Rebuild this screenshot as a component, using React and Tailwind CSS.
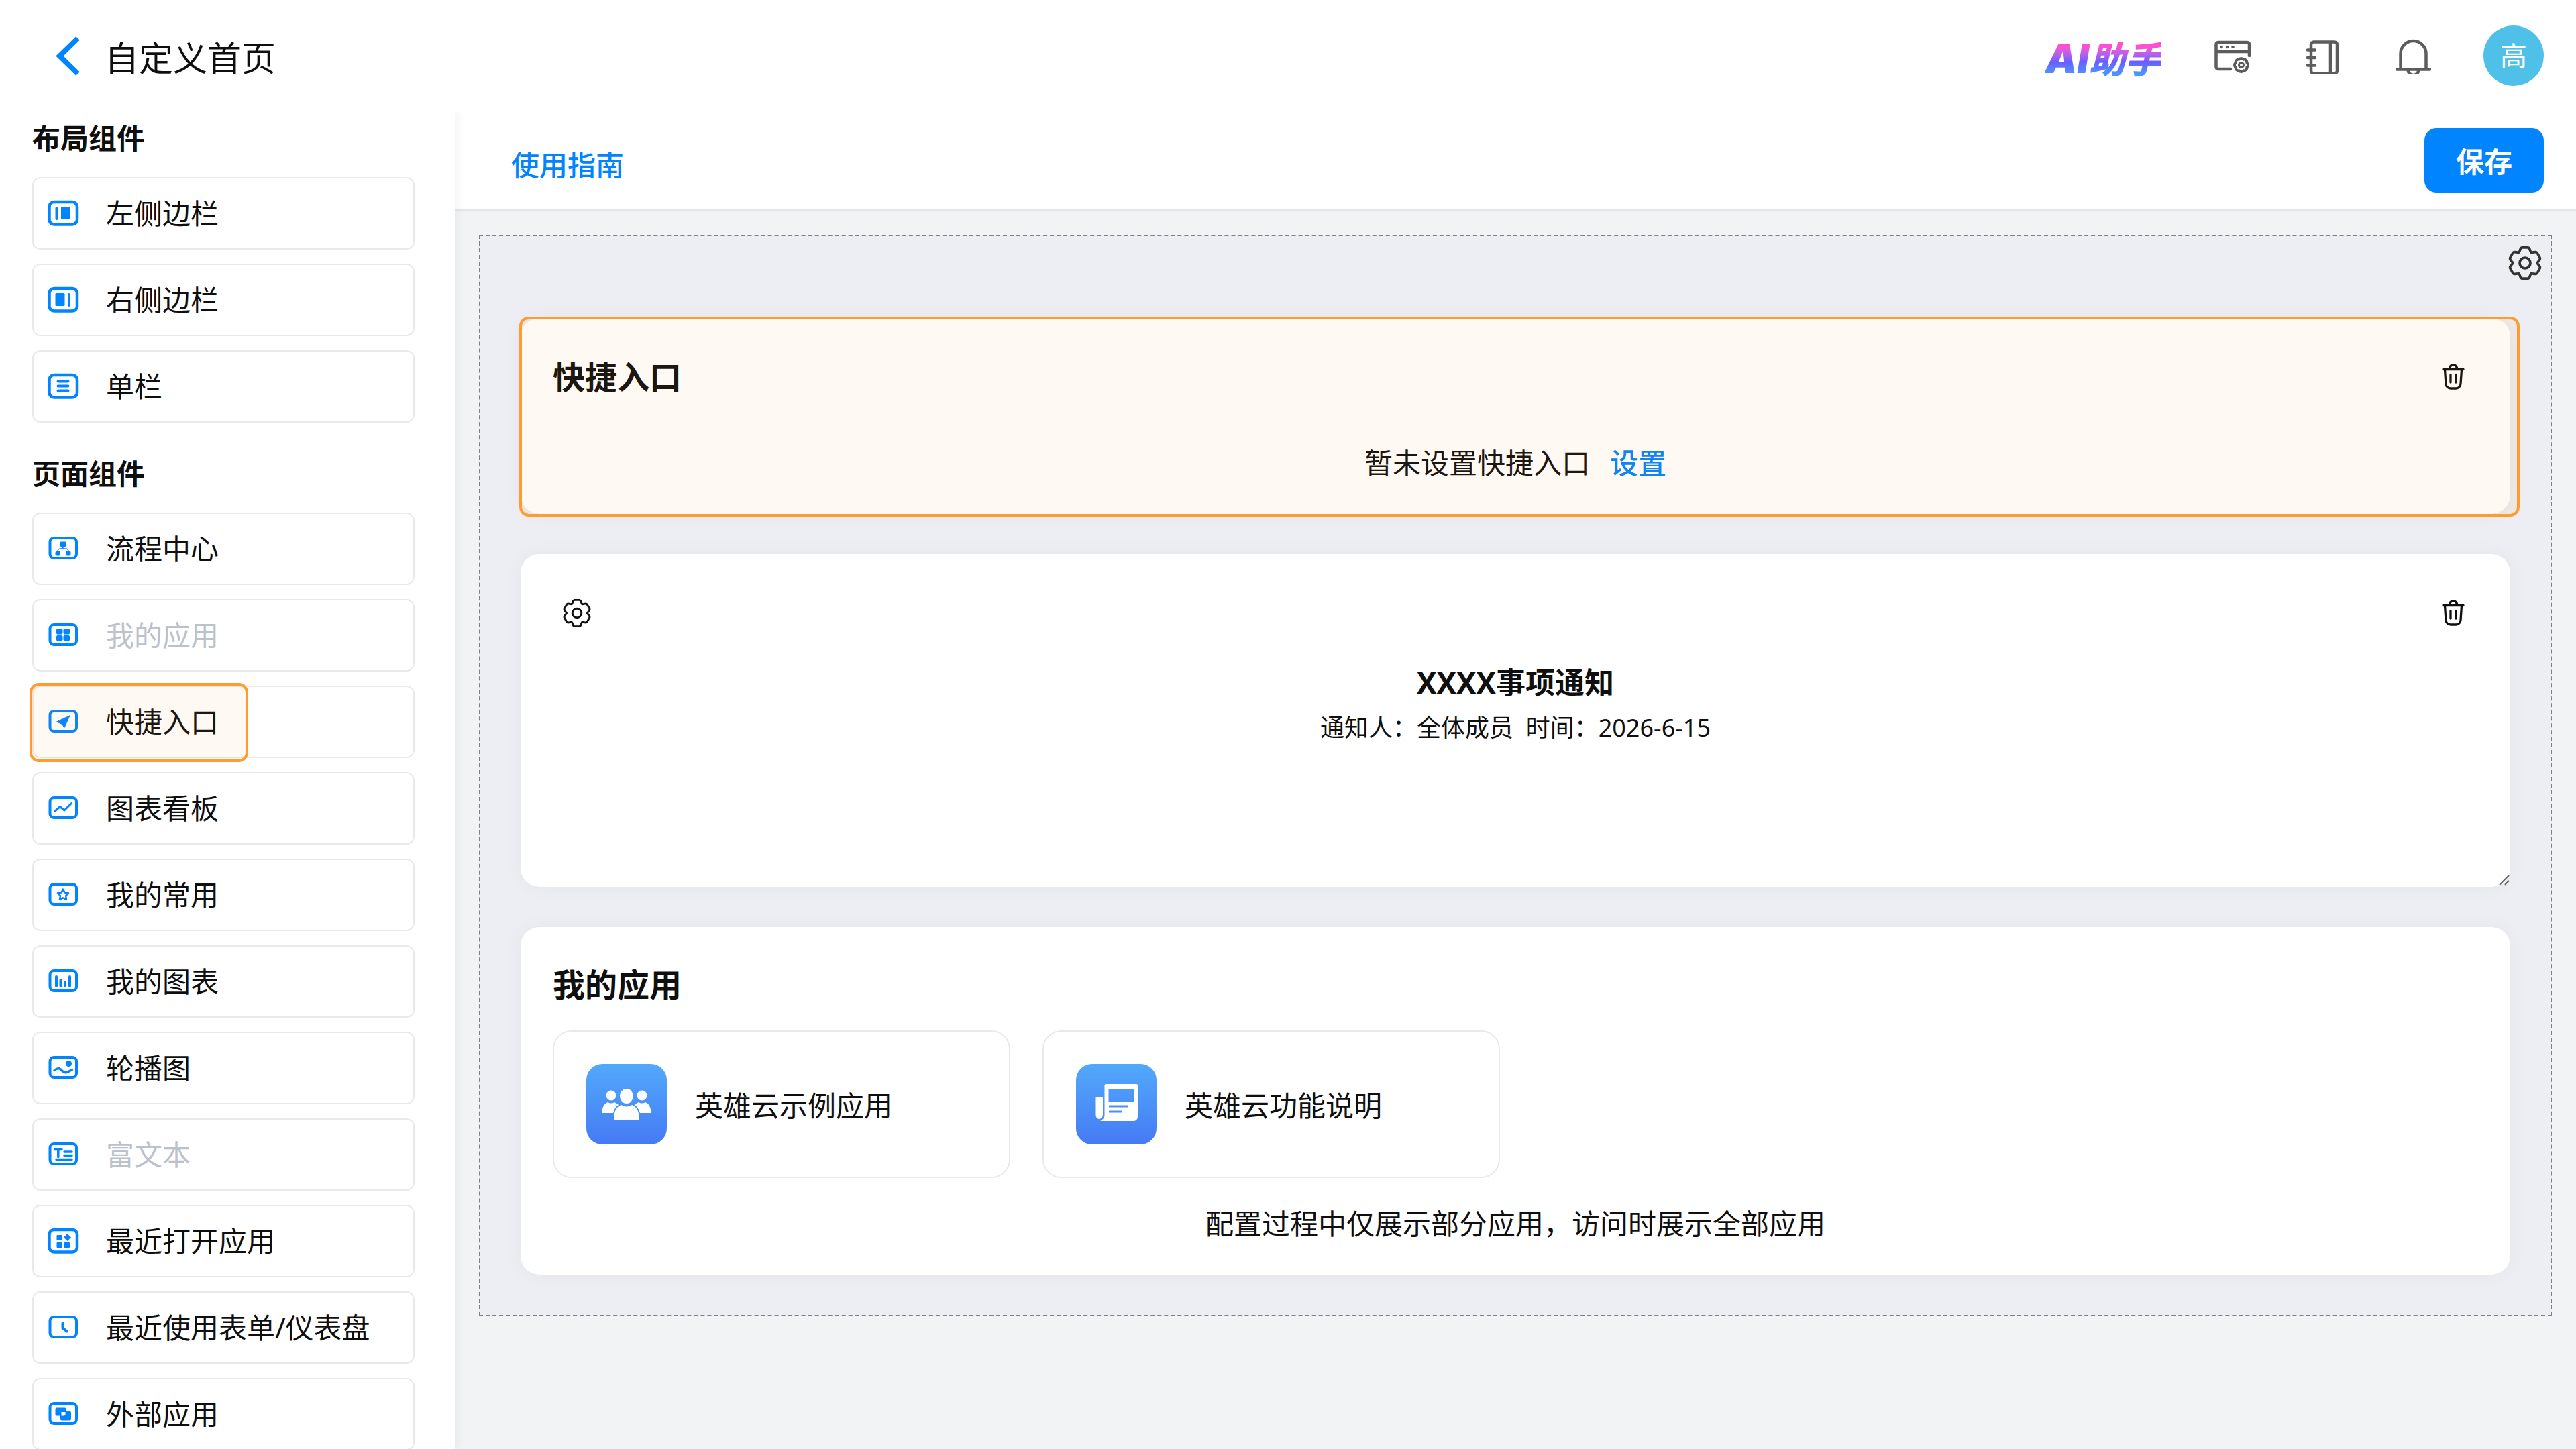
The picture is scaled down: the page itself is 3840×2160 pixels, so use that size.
const layoutItems = [
  { name: '左侧边栏', icon: 'left' },
  { name: '右侧边栏', icon: 'right' },
  { name: '单栏', icon: 'single' },
];

const pageItems = [
  { name: '流程中心', icon: 'flow' },
  { name: '我的应用', icon: 'apps', disabled: true },
  { name: '快捷入口', icon: 'entry', active: true },
  { name: '图表看板', icon: 'board' },
  { name: '我的常用', icon: 'star' },
  { name: '我的图表', icon: 'bars' },
  { name: '轮播图', icon: 'carousel' },
  { name: '富文本', icon: 'text', disabled: true },
  { name: '最近打开应用', icon: 'recent' },
  { name: '最近使用表单/仪表盘', icon: 'clock' },
  { name: '外部应用', icon: 'external' },
];

// inner part of every sidebar icon, drawn inside a 48x40 frame
const glyphs = {
  left: (
    <>
      <path d="M14.5 12V28" strokeWidth="4" />
      <rect x="21" y="10" width="14" height="19" rx="1.5" fill="currentColor" stroke="none" />
    </>
  ),
  right: (
    <>
      <rect x="12.5" y="10" width="14" height="19" rx="1.5" fill="currentColor" stroke="none" />
      <path d="M33 12V28" strokeWidth="4" />
    </>
  ),
  single: <path d="M16.500 12.500H31.500M16.500 19.500H31.500M16.500 26.500H31.500" strokeWidth="4" />,
  flow: (
    <>
      <rect x="19" y="9.500" width="10" height="7.500" rx="2" fill="currentColor" stroke="none" />
      <path d="M24 16V20M16 25V24a4 4 0 0 1 4-4h8a4 4 0 0 1 4 4V25" strokeWidth="1.500" />
      <rect x="12.500" y="23.500" width="7.500" height="7" rx="2.500" fill="currentColor" stroke="none" />
      <rect x="28" y="23.500" width="7.500" height="7" rx="2.500" fill="currentColor" stroke="none" />
    </>
  ),
  apps: (
    <g fill="currentColor" stroke="none">
      <rect x="14" y="10" width="9.500" height="8.500" rx="2" />
      <rect x="24.500" y="10" width="9.500" height="8.500" rx="2" />
      <rect x="14" y="20" width="9.500" height="8.500" rx="2" />
      <rect x="24.500" y="20" width="9.500" height="8.500" rx="2" />
    </g>
  ),
  entry: <path d="M34 11L26 28.500L22.500 23.500L15 20Z" fill="currentColor" strokeWidth="1" />,
  board: <path d="M11.500 24.500L19.500 17.500L26 23L36.500 12.500" strokeWidth="3" />,
  star: (
    <path
      d="M24 11.500L26.600 16.500L32 17.300L28.100 21.200L29 27L24 24.400L19 27L19.900 21.200L16 17.300L21.400 16.500Z"
      strokeWidth="2.500"
    />
  ),
  bars: <path d="M14 13V27M20.500 18V27M27 21.500V27M34 13V27" strokeWidth="4" />,
  carousel: (
    <>
      <circle cx="32.500" cy="13.500" r="4.500" fill="currentColor" stroke="none" />
      <path d="M11 23.500C17 18.500 20 21 23 24.500C28 29 31 26 37.500 22.500" strokeWidth="3.500" />
    </>
  ),
  text: <path d="M11.500 12.500H22M16.800 12.500V23.500M26 16H37M26 21.500H37M14 27.500H37" strokeWidth="3.500" />,
  recent: (
    <g fill="currentColor" stroke="none">
      <rect x="14.500" y="11" width="8.500" height="8" rx="1" />
      <path d="M30.500 9L36 14.500L30.500 20L25 14.500Z" />
      <rect x="14.500" y="22" width="8.500" height="8" rx="1" />
      <rect x="25.500" y="22" width="8.500" height="8" rx="1" />
    </g>
  ),
  clock: <path d="M23.500 13.500V20.500L29.500 25.500" strokeWidth="4" strokeLinejoin="miter" />,
  external: (
    <>
      <rect x="12.500" y="10.500" width="16" height="12" rx="2" fill="currentColor" stroke="none" />
      <rect x="20" y="16" width="16" height="13.500" rx="2" fill="currentColor" stroke="none" />
      <path d="M21.500 17H27.500V21L26 22.500H21.500Z" fill="#fff" stroke="none" />
    </>
  ),
};

const bigFrames = ['left', 'right', 'single', 'recent'];

const ItemIcon = ({ type }) => (
  <svg
    className="w-12 h-10 shrink-0 text-[#0084ff]"
    viewBox="0 0 48 40"
    fill="none"
    stroke="currentColor"
    strokeLinecap="round"
    strokeLinejoin="round"
  >
    {bigFrames.includes(type) ? (
      <rect x="3.500" y="3" width="41.500" height="33.500" rx="7" strokeWidth="4.500" />
    ) : (
      <rect x="4.500" y="4" width="39.500" height="30" rx="6" strokeWidth="4" />
    )}
    {glyphs[type]}
  </svg>
);

// one lobe, repeated every 60 degrees
const GearIcon = ({ className, strokeWidth }) => (
  <svg className={className} viewBox="-26 -26 52 52" fill="none" stroke="currentColor" strokeWidth={strokeWidth} strokeLinecap="round">
    {[0, 60, 120, 180, 240, 300].map((angle) => (
      <path
        key={angle}
        d="M-9.200 -16C-7 -17.300 -8 -23.200 -4 -23.200H4C8 -23.200 7 -17.300 9.200 -16"
        transform={`rotate(${angle})`}
      />
    ))}
    <circle r="8" />
  </svg>
);

const SidebarItem = ({ item }) => (
  <li>
    <button
      disabled={item.disabled}
      className="relative w-full h-[108px] flex items-center gap-10 pl-5 border-2 border-[#e9e9e9] rounded-xl bg-white text-[42px] leading-[60px] disabled:text-[#bcc2cc]"
    >
      <ItemIcon type={item.icon} />
      <span className="whitespace-nowrap">{item.name}</span>
      {item.active && (
        <span className="absolute -top-1.5 -bottom-2 -left-1.5 w-[326px] border-4 border-[#ff9b2f] bg-[#ff9b2f]/6 rounded-[14px]" />
      )}
    </button>
  </li>
);

const SidebarGroup = ({ title, items }) => (
  <section>
    <h2 className="text-[42px] leading-[60px] font-bold mb-7">{title}</h2>
    <ul className="flex flex-col gap-[21px]">
      {items.map((item) => (
        <SidebarItem key={item.name} item={item} />
      ))}
    </ul>
  </section>
);

const TrashButton = () => (
  <button aria-label="删除" className="mr-5">
    <svg className="w-[34px] h-10" viewBox="0 0 34 40" fill="none" stroke="currentColor" strokeWidth="3.300" strokeLinecap="round" strokeLinejoin="round">
      <path d="M2 8.500H32M11.500 8C11.500 4 13.500 2 17 2S22.500 4 22.500 8" />
      <path d="M4.500 9L6 30.500a7 7 0 0 0 7 6.500h8a7 7 0 0 0 7-6.500L29.500 9M13 16.500V28M21 16.500V28" />
    </svg>
  </button>
);

const HeaderIcon = ({ label, children }) => (
  <button aria-label={label}>
    <svg className="size-14" viewBox="0 -3 56 56" fill="none" stroke="#5c5c5c" strokeWidth="4.500" strokeLinecap="round" strokeLinejoin="round">
      {children}
    </svg>
  </button>
);

const Header = () => (
  <header className="relative z-20 h-[166px] shrink-0 bg-white flex items-center justify-between pl-20 pr-12">
    <div className="flex items-center gap-9">
      <button aria-label="返回">
        <svg className="w-10 h-16" viewBox="0 0 40 64" fill="none" stroke="#0084ff" strokeWidth="8">
          <path d="M36 6L9 32.500L36 59" />
        </svg>
      </button>
      <h1 className="text-[51px] leading-[72px] pt-1.5">自定义首页</h1>
    </div>
    <div className="flex items-center gap-[78px]">
      <button className="flex items-baseline pt-2 font-black italic leading-[64px] bg-linear-to-b from-[#ff4fd0] from-30% via-[#6a5cff] via-62% to-[#3f9bff] to-90% bg-clip-text text-transparent">
        <span className="font-[Inter] text-[60px]">AI</span>
        <span className="text-[54px]">助手</span>
      </button>
      <HeaderIcon label="页面设置">
        <path d="M25 45H6.500a3 3 0 0 1-3-3V8a3 3 0 0 1 3-3H50a3 3 0 0 1 3 3V25M4 19H53" />
        <path d="M11.500 12h.1M20 12h.1M28.500 12h.1" />
        <path
          d="M49.300 42.400A4.200 4.200 0 0 1 44.400 47.300A4.200 4.200 0 0 1 37.600 47.300A4.200 4.200 0 0 1 32.700 42.400A4.200 4.200 0 0 1 32.700 35.600A4.200 4.200 0 0 1 37.600 30.700A4.200 4.200 0 0 1 44.400 30.700A4.200 4.200 0 0 1 49.300 35.600A4.200 4.200 0 0 1 49.300 42.400Z"
          strokeWidth="4"
        />
        <circle cx="41" cy="39" r="3.500" strokeWidth="3" />
      </HeaderIcon>
      <HeaderIcon label="通讯录">
        <rect x="11" y="4.500" width="39" height="47" rx="4" />
        <path d="M40 5V51M6 16.500H17M6 28H17M6 39.500H17" />
      </HeaderIcon>
      <HeaderIcon label="消息">
        <path d="M10.500 45V22a19 19 0 0 1 38 0V45M5 45.500H54M21.500 46a8 8 0 0 0 16 0" />
      </HeaderIcon>
      <button className="size-[90px] rounded-full bg-[#4fc1e9] text-white text-[40px] leading-[60px]">高</button>
    </div>
  </header>
);

const UsersIcon = () => (
  <svg className="size-full" viewBox="0 0 120 120" fill="#fff">
    <ellipse cx="60" cy="48" rx="10" ry="11" />
    <circle cx="37" cy="47" r="7.500" />
    <circle cx="83" cy="47" r="7.500" />
    <path d="M41 83C41 72 44 64 52 61Q60 66 68 61C76 64 79 72 79 83Z" />
    <path d="M23.500 73C23.500 64 27 59 32 57Q37 60 42 57Q46 59 48 61Q42 65 40 73Z" />
    <path d="M96.500 73C96.500 64 93 59 88 57Q83 60 78 57Q74 59 72 61Q78 65 80 73Z" />
  </svg>
);

const NewsIcon = () => (
  <svg className="size-full" viewBox="0 0 120 120" fill="#fff">
    <path
      fillRule="evenodd"
      d="M44.500 30H90a2 2 0 0 1 2 2V79a6 6 0 0 1-6 6H36C40 83 42.500 80 42.500 76V32a2 2 0 0 1 2-2ZM48.500 37V56H86V37Z"
    />
    <path d="M29.500 49.500H40V75C40 79 37.500 82 34.500 82S29.500 79 29.500 76Z" />
    <path d="M49 63H78M49 71H68" stroke="#4b91f7" strokeWidth="3" />
  </svg>
);

const AppCard = ({ name, children }) => (
  <button className="w-[682px] flex items-center gap-[42px] p-12 border-2 border-[#e9e9e9] rounded-[28px] text-[42px] leading-[60px]">
    <span className="size-[120px] rounded-3xl bg-linear-to-b from-[#52a9fa] to-[#467af4]">{children}</span>
    <span className="pt-1">{name}</span>
  </button>
);

const cardClass = 'relative px-12 bg-white rounded-[28px] shadow-[0_0_30px_rgba(0,0,0,0.04)]';

const QuickEntryCard = () => (
  <section className={`${cardClass} pt-14 pb-[46px]`}>
    <div className="flex items-center justify-between">
      <h3 className="text-[48px] leading-[64px] font-bold">快捷入口</h3>
      <TrashButton />
    </div>
    <p className="mt-[66px] flex justify-center gap-[30px] text-[42px] leading-[60px]">
      暂未设置快捷入口
      <a href="#setting" className="text-[#0084ff] font-medium">设置</a>
    </p>
    <div className="absolute -top-0.5 -left-0.5 -bottom-1 -right-3.5 border-4 border-[#ff9b2f] bg-[#ff9b2f]/6 rounded-[14px] pointer-events-none" />
  </section>
);

const NoticeCard = () => (
  <section className={`${cardClass} min-h-[496px] pt-[66px]`}>
    <div className="flex items-center justify-between pl-3.5">
      <button aria-label="设置">
        <GearIcon className="size-11" strokeWidth="3.500" />
      </button>
      <TrashButton />
    </div>
    <h3 className="mt-[45px] text-center text-[44px] leading-[72px] font-bold">XXXX事项通知</h3>
    <p className="text-center text-[36px] leading-[64px]">通知人：全体成员&nbsp;&nbsp;时间：2026-6-15</p>
    <svg className="absolute right-px bottom-0.5 size-4" viewBox="0 0 16 16" stroke="#666" strokeWidth="2">
      <path d="M1 15L15 1M9 15L15 9" />
    </svg>
  </section>
);

const MyAppsCard = () => (
  <section className={`${cardClass} pt-[54px] pb-[46px]`}>
    <h3 className="text-[48px] leading-[64px] font-bold">我的应用</h3>
    <div className="mt-9 flex flex-wrap gap-12">
      <AppCard name="英雄云示例应用">
        <UsersIcon />
      </AppCard>
      <AppCard name="英雄云功能说明">
        <NewsIcon />
      </AppCard>
    </div>
    <p className="mt-[38px] text-center text-[42px] leading-[60px]">配置过程中仅展示部分应用，访问时展示全部应用</p>
  </section>
);

function App() {
  return (
    <div className="h-screen flex flex-col overflow-hidden bg-white text-[#0f0f0f] font-['Noto_Sans','Noto_Sans_CJK_SC',sans-serif]">
      <Header />
      <div className="flex-1 min-h-0 flex">
        <aside className="relative z-10 w-[678px] shrink-0 overflow-hidden bg-white pt-2.5 pl-12 pr-15 flex flex-col gap-[46px] shadow-[4px_0_12px_rgba(0,0,0,0.05)]">
          <SidebarGroup title="布局组件" items={layoutItems} />
          <SidebarGroup title="页面组件" items={pageItems} />
        </aside>
        <main className="flex-1 min-w-0 bg-[#f1f3f5]">
          <div className="h-[148px] flex items-center justify-between pl-[84px] pr-12 bg-white border-b-2 border-[#e6e6e6]">
            <a href="#guide" className="pt-3.5 text-[42px] leading-[60px] font-medium text-[#0084ff]">使用指南</a>
            <button className="w-[178px] h-24 pt-1 rounded-[18px] bg-[#0084ff] text-white text-[42px] leading-[60px] font-bold">保存</button>
          </div>
          <div className="mx-9 mt-9 border-2 border-dashed border-[#808080] bg-[#edeef3]">
            <div className="h-[122px] flex items-start justify-end pt-3.5 pr-3">
              <button aria-label="页面配置" className="text-[#333]">
                <GearIcon className="size-13" strokeWidth="3.700" />
              </button>
            </div>
            <div className="flex flex-col gap-15 px-15 pb-[60px]">
              <QuickEntryCard />
              <NoticeCard />
              <MyAppsCard />
            </div>
          </div>
        </main>
      </div>
    </div>
  );
}

export default App;
